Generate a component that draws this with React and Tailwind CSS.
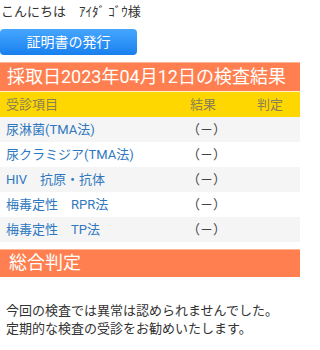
import React from 'react'

const rows = [
    '尿淋菌(TMA法)',
    '尿クラミジア(TMA法)',
    'HIV　抗原・抗体',
    '梅毒定性　RPR法',
    '梅毒定性　TP法',
]

export default function App() {
    return (
        <div className="w-[300px] h-[350px] bg-white overflow-hidden text-[#333] font-['Roboto','Noto_Sans_CJK_JP',sans-serif]">
            <p className="pl-[1px] pt-[3px] text-[13px] leading-[18px]">
                こんにちは　ｱｲﾀﾞ ｺﾞｳ様
            </p>

            <button className="mt-[8px] w-[137px] h-[26px] rounded-[4px] bg-gradient-to-b from-[#45a6ff] to-[#1680ee] text-white text-[14px] leading-[26px]">
                証明書の発行
            </button>

            {/* 検査結果 */}
            <div className="mt-[7px] h-[29px] bg-[#ff7f50] border-t border-[#ffb595] text-white text-[18px] leading-[27px] pl-[7px]">
                採取日2023年04月12日の検査結果
            </div>
            <div className="border-t border-[#fff3c0] h-[26px] bg-[#ffd700] grid grid-cols-[183px_74px_43px] items-center text-[13px] text-[#8a7f55]">
                <span className="pl-[6px]">受診項目</span>
                <span className="pl-[7px]">結果</span>
                <span>判定</span>
            </div>
            {rows.map((name, i) => (
                <div
                    key={name}
                    className={`h-[25px] grid grid-cols-[183px_74px_43px] items-center text-[13px] ${i % 2 === 0 ? 'bg-[#f5f5f5]' : 'bg-white'}`}
                >
                    <span className="pl-[6px] text-[#2f78c0]">{name}</span>
                    <span className="pl-[4px] text-[#444]">（－）</span>
                    <span></span>
                </div>
            ))}

            {/* 総合判定 */}
            <div className="mt-[7px] h-[28px] bg-[#ff7f50] border-t border-[#ffb595] text-white text-[18px] leading-[26px] pl-[9px]">
                総合判定
            </div>
            <div className="pt-[25px] pl-[6px] text-[13px] leading-[18px] text-[#333]">
                <p>今回の検査では異常は認められませんでした。</p>
                <p>定期的な検査の受診をお勧めいたします。</p>
            </div>
        </div>
    )
}
